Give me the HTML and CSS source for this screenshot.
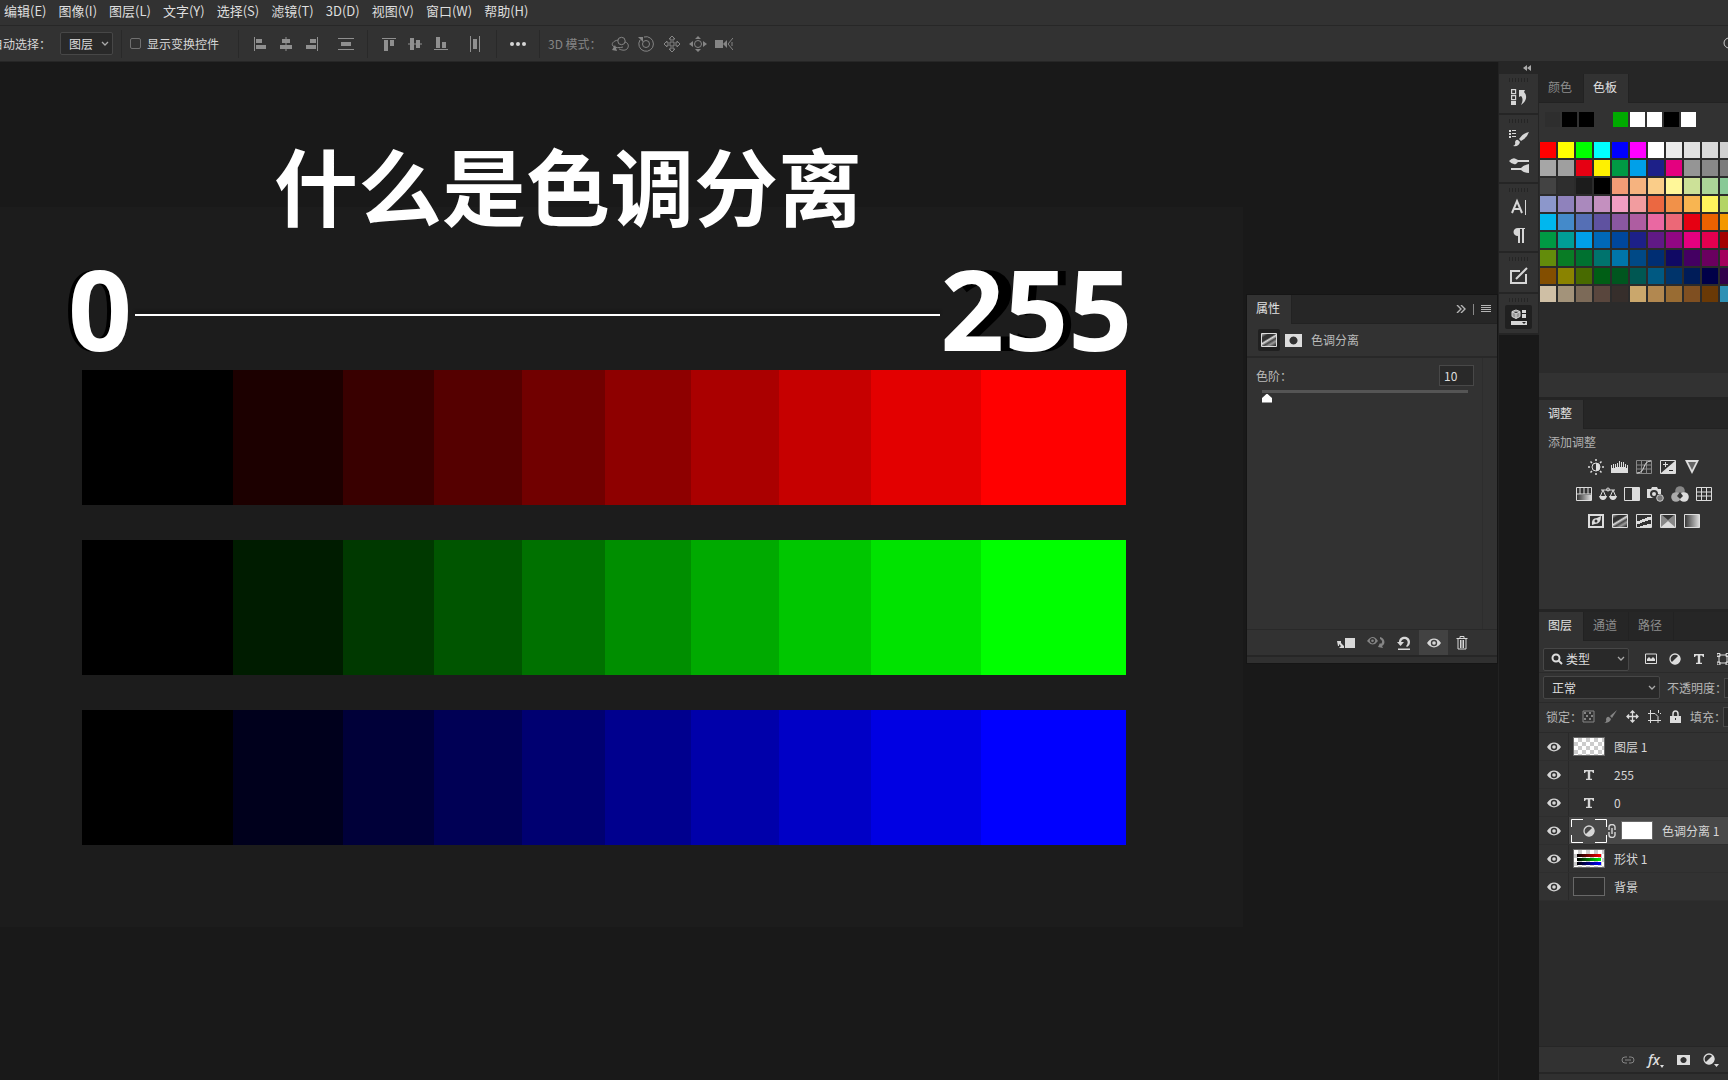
FILE: index.html
```html
<!DOCTYPE html>
<html lang="zh-CN">
<head>
<meta charset="utf-8">
<title>什么是色调分离</title>
<link rel="stylesheet" href="styles.css">
</head>
<body>
<svg class="sprite" aria-hidden="true">
  <symbol id="eye" viewBox="0 0 14 10"><path fill="currentColor" fill-rule="evenodd" d="M0 5Q3 .6 7 .6T14 5Q11 9.4 7 9.4T0 5ZM7 1.8A3.2 3.2 0 1 0 7 8.2A3.2 3.2 0 0 0 7 1.8Z"/><circle cx="7" cy="5" r="1.8" fill="currentColor"/></symbol>
  <symbol id="chevron" viewBox="0 0 8 6"><path d="M1 1l3 3 3-3" fill="none" stroke="currentColor" stroke-width="1.3"/></symbol>
  <symbol id="half" viewBox="0 0 12 12"><circle cx="6" cy="6" r="5" fill="none" stroke="currentColor" stroke-width="1.3"/><path d="M9.800 2.200A5.300 5.300 0 0 1 2.200 9.800Z" fill="currentColor"/></symbol>
  <symbol id="type" viewBox="0 0 12 12"><path fill="currentColor" d="M1 1h10v3h-1L9 2.500H7.200v7.300H9V11H3V9.800h1.800V2.500H3L2 4H1z"/></symbol>
  <symbol id="mask" viewBox="0 0 17 13"><path fill="currentColor" fill-rule="evenodd" d="M0 0H17V13H0ZM8.500 2.500a4 4 0 1 0 .01 0Z"/></symbol>
  <linearGradient id="steel"><stop offset="0" stop-color="#333"/><stop offset="1" stop-color="#ddd"/></linearGradient>
  <linearGradient id="stripes" x1="0.1" y1="0" x2="0.8" y2="1"><stop offset="0" stop-color="#aaa"/><stop offset=".2" stop-color="#333"/><stop offset=".4" stop-color="#333"/><stop offset=".5" stop-color="#ddd"/><stop offset=".65" stop-color="#444"/><stop offset=".8" stop-color="#999"/><stop offset="1" stop-color="#333"/></linearGradient>
</svg>

<header>
  <nav class="menu">
    <a href="#">编辑(E)</a><a href="#">图像(I)</a><a href="#">图层(L)</a><a href="#">文字(Y)</a><a href="#">选择(S)</a><a href="#">滤镜(T)</a><a href="#">3D(D)</a><a href="#">视图(V)</a><a href="#">窗口(W)</a><a href="#">帮助(H)</a>
  </nav>
  <div class="options">
    <div class="group auto"><label for="auto-select">自动选择：</label>
      <span class="select"><select id="auto-select"><option>图层</option></select><svg width="8" height="6"><use href="#chevron"/></svg></span></div>
    <label class="group transform"><input type="checkbox">显示变换控件</label>
    <div class="group align">
      <button aria-label="左对齐"><svg width="16" height="16" viewBox="0 0 16 16"><path d="M2 1h1v14H2zM4 3h6v4H4zM4 9h10v4H4z"/></svg></button>
      <button aria-label="水平居中"><svg width="16" height="16" viewBox="0 0 16 16"><path d="M7.500 1h1v14h-1zM4 3h8v4H4zM2 9h12v4H2z"/></svg></button>
      <button aria-label="右对齐"><svg width="16" height="16" viewBox="0 0 16 16"><path d="M13 1h1v14h-1zM6 3h6v4H6zM2 9h10v4H2z"/></svg></button>
      <button class="spaced" aria-label="垂直分布"><svg width="16" height="16" viewBox="0 0 16 16"><path d="M0 2h16v1H0zM3 6h10v4H3zM0 13h16v1H0z"/></svg></button>
    </div>
    <div class="group align">
      <button aria-label="顶对齐"><svg width="16" height="16" viewBox="0 0 16 16"><path d="M1 2h14v1H1zM3 4h4v11H3zM9 4h4v6H9z"/></svg></button>
      <button aria-label="垂直居中"><svg width="16" height="16" viewBox="0 0 16 16"><path d="M1 7.500h14v1H1zM3 2h4v12H3zM9 4h4v8H9z"/></svg></button>
      <button aria-label="底对齐"><svg width="16" height="16" viewBox="0 0 16 16"><path d="M1 13h14v1H1zM3 1h4v11H3zM9 6h4v6H9z"/></svg></button>
      <button class="spaced" aria-label="水平分布"><svg width="16" height="16" viewBox="0 0 16 16"><path d="M3 0h1v16H3zM6 3h4v10H6zM12 0h1v16h-1z"/></svg></button>
    </div>
    <div class="group more"><button aria-label="更多"><svg width="16" height="6" viewBox="0 0 16 6"><circle cx="2" cy="3" r="2"/><circle cx="8" cy="3" r="2"/><circle cx="14" cy="3" r="2"/></svg></button></div>
    <div class="group modes"><span>3D 模式：</span>
      <button aria-label="环绕"><svg class="line" width="18" height="16" viewBox="0 0 18 16"><circle cx="10.500" cy="5" r="3.700"/><path d="M7 4C2 5 0 8 2 10s7 2 10 1M14 6c4 1 4 5 2 7s-6 1-8 0"/><path class="solid" d="M4 9l2 6-5-1z"/></svg></button>
      <button aria-label="滚动"><svg class="line" width="18" height="16" viewBox="0 0 18 16"><circle cx="9" cy="8" r="3.500"/><path d="M3 4a7.300 7.300 0 1 0 4-3"/><path class="solid" d="M1 1h5v5z"/></svg></button>
      <button aria-label="拖动"><svg class="line" width="18" height="16" viewBox="0 0 18 16"><path d="M9 0l3 3h-2v4h4V5l3 3-3 3V9h-4v4h2l-3 3-3-3h2V9H4v2L1 8l3-3v2h4V3H6z"/></svg></button>
      <button aria-label="滑动"><svg class="line" width="18" height="16" viewBox="0 0 18 16"><circle cx="9" cy="8" r="3.500"/><path class="solid" d="M9 0l3 3H6zM9 16l3-3H6zM0 8l4-3v6zM18 8l-4-3v6z"/></svg></button>
      <button aria-label="缩放"><svg class="line" width="18" height="16" viewBox="0 0 18 16"><path class="solid" d="M0 4h8v8H0zM8 8l4-4v8z"/><path d="M18 2l-5 6 5 6M17 6v4"/></svg></button>
    </div>
    <button class="search" aria-label="搜索"><svg class="line" width="14" height="14" viewBox="0 0 14 14"><circle cx="6" cy="6" r="5"/><path d="M10 10l4 4"/></svg></button>
  </div>
</header>

<main>
  <section class="canvas">
    <div class="artwork">
      <h1>什么是色调分离</h1>
      <div class="scale"><span class="near">0</span><i class="rule"></i><span><span class="deep">2</span><span class="soft">5</span>5</span></div>
      <div class="bar red"></div>
      <div class="bar green"></div>
      <div class="bar blue"></div>
    </div>

    <aside class="properties">
      <div class="tabs"><button class="tab active">属性</button><span class="tools">
        <svg class="line" width="10" height="8" viewBox="0 0 10 8"><path stroke-width="1.400" d="M1 0l4 4-4 4M5 0l4 4-4 4"/></svg><i></i>
        <svg class="line" width="10" height="8" viewBox="0 0 10 8"><path d="M0 .5h10M0 2.500h10M0 4.500h10M0 6.500h10"/></svg></span></div>
      <div class="subject"><span class="chip"><svg width="16" height="14" viewBox="0 0 16 14"><path fill="url(#stripes)" stroke="#ddd" d="M.5.5h15v13H.5z"/></svg></span><svg width="17" height="13"><use href="#mask"/></svg><span>色调分离</span></div>
      <div class="body">
        <div class="field"><label for="levels">色阶：</label><input id="levels" class="num-input" type="text" value="10"></div>
        <input class="slider" type="range" min="2" max="255" value="2" aria-label="色阶滑块">
      </div>
      <div class="actions">
        <button aria-label="剪切到图层"><svg width="18" height="14" viewBox="0 0 18 14"><path d="M8 2h10v10H8zM0 5h4v2L7 10v2H2l2-2-2-2v2H1z"/></svg></button>
        <button class="dim" aria-label="查看上一状态"><svg width="18" height="14" viewBox="0 0 18 14"><path fill-rule="evenodd" d="M0 5q6-8 11 0q-5 7-11 0M5.500 2a2.700 2.700 0 1 0 .01 0M13 1c5 1 6 7 2 9l1 2-5-1 2-4 1 1c2-2 1-4-1-5z"/><circle cx="5.500" cy="4.700" r="1.300"/></svg></button>
        <button aria-label="复位"><svg width="14" height="14" viewBox="0 0 14 14"><path d="M1 12.500h12V14H1zM0 6h2c0-7 11-7 11 0 0 2-1 4-3 5l-1-1c4-4 0-9-4-6L4 6h3l-3.500 4z"/></svg></button>
        <button class="on" aria-label="可见性"><svg width="14" height="10"><use href="#eye"/></svg></button>
        <button aria-label="删除"><svg class="line" width="12" height="14" viewBox="0 0 12 14"><path d="M.5 2.500h11M4 2V.5h4V2M2 3v10h8V3M4.500 4v8M6 4v8M7.500 4v8"/></svg></button>
      </div>
      <div class="grip"></div>
    </aside>
  </section>

  <nav class="dock">
    <div class="dock-head"><svg width="8" height="6" viewBox="0 0 8 6"><path d="M4 0v6L0 3zM8 0v6L4 3z"/></svg></div>
    <div class="dock-group"><button aria-label="历史记录"><svg width="20" height="18" viewBox="0 0 20 18"><path fill="none" stroke="currentColor" stroke-width="1.200" d="M2.600 1.600h4v4h-4zM2.600 7.600h4v4h-4z"/><path d="M2 13h5v4H2zM10 2h6l-1 2c4 4 2 10-3 13 2-4 2-7 0-9l-2 1z"/></svg></button></div>
    <div class="dock-group"><button aria-label="画笔预设"><svg width="20" height="18" viewBox="0 0 20 18"><path d="M0 1h2v2H0zM3 1h4v1H3zM0 4h2v2H0zM3 4h4v1H3zM0 7h2v2H0zM3 7h4v1H3zM20 3q-2 6-8 9l-2-2Q14 4 20 3zM9 11l2 2q-1 5-7 4 3-1 2-4 1-3 3-2z"/></svg></button>
      <button aria-label="画笔"><svg width="20" height="18" viewBox="0 0 20 18"><path d="M0 4q4-4 7-2l2 1h11v2H9L7 7Q3 8 0 4zM2 11h10q3-3 8-4v9q-5 0-8-3H2z"/></svg></button></div>
    <div class="dock-group text"><button aria-label="字符"><svg class="line glyph" width="20" height="18" viewBox="0 0 20 18"><path d="M3 15L8 3l5 12M5 11h6"/><path stroke-width="1" d="M16.500 2v15"/></svg></button>
      <button aria-label="段落"><svg width="20" height="18" viewBox="0 0 20 18"><path d="M9 2h7v1h-1v14h-2V3h-2v14H9v-7C3 10 3 2 9 2z"/></svg></button></div>
    <div class="dock-group"><button aria-label="注释"><svg class="line glyph" width="20" height="18" viewBox="0 0 20 18"><path d="M11 4H2v12h15V7M7 12L18 1"/></svg></button></div>
    <div class="dock-group"><button class="pressed" aria-label="属性"><svg width="16" height="16" viewBox="0 0 16 16"><path fill="#999" stroke="currentColor" d="M1 2.500L5 1l4 1.500v5L5 9.500 1 7.500zM1 3l4 1.500L9 3M5 4.500v5"/><path d="M11 1h4v3h-4zM11 5h4v4h-4zM0 12h16v4H0z"/><path fill="#222" d="M11 13h4l-2 2z"/></svg></button></div>
  </nav>

  <aside class="panels">
    <section class="panel swatches">
      <div class="tabs"><button class="tab">颜色</button><button class="tab active">色板</button></div>
      <div class="recent" id="recent"></div>
      <div class="palette" id="palette"></div>
      <div class="strip"></div>
    </section>
    <section class="panel adjust">
      <div class="tabs"><button class="tab active">调整</button></div>
      <p>添加调整</p>
      <div class="icons">
        <button aria-label="亮度"><svg class="line" width="16" height="16" viewBox="0 0 16 16"><circle cx="8" cy="8" r="4"/><path class="solid" d="M8 4a4 4 0 0 1 0 8z"/><path stroke-width="1.500" d="M8 0v2M8 14v2M0 8h2M14 8h2M2.500 2.500L4 4M12 12l1.500 1.500M2.500 13.500L4 12M12 4l1.500-1.500"/></svg></button>
        <button aria-label="色阶"><svg width="18" height="14" viewBox="0 0 18 14"><path d="M0 13V5h1v3h1V4h1v4h1V4h1v3h1V3h1v4h1V1h1v6h1V2h1v5h1V2h1v5h1V4h1v4h1V5h1v8z"/></svg></button>
        <button aria-label="曲线"><svg class="line" width="16" height="14" viewBox="0 0 16 14"><path class="faint" d="M.5.5h15v13H.5zM5.500 1v12M10.500 1v12M1 5h14M1 9h14"/><path d="M1 13C10 13 6 1 15 1"/></svg></button>
        <button aria-label="曝光度"><svg class="line" width="16" height="14" viewBox="0 0 16 14"><path d="M.5.5h15v13H.5z"/><path class="solid" d="M15 1v12L1 13z"/><path d="M3 4.500h5M5.500 2v5"/><path stroke="#222" d="M9 10.500h4"/></svg></button>
        <button aria-label="自然饱和度"><svg width="16" height="14" viewBox="0 0 16 14"><path d="M1 0h14L8 14z"/><path fill="#666" d="M4 2h8l-4 8z"/></svg></button>
      </div>
      <div class="icons wide">
        <button aria-label="色相"><svg class="line" width="16" height="14" viewBox="0 0 16 14"><path d="M.5.5h15v13H.5zM4 1v6M8 1v6M12 1v6M1 7h14"/><path fill="url(#steel)" stroke="none" d="M1 8h14v5H1z"/></svg></button>
        <button aria-label="色彩平衡"><svg class="line" width="18" height="14" viewBox="0 0 18 14"><path d="M2 3h14M4 3L1 10M4 3l3 7M14 3l-3 7M14 3l3 7"/><circle cx="9" cy="2.500" r="1.500"/><path class="solid" d="M0 9h8q-1 4-4 4T0 9zM10 9h8q-1 4-4 4t-4-4z"/></svg></button>
        <button aria-label="黑白"><svg class="line" width="16" height="14" viewBox="0 0 16 14"><path d="M.5.5h15v13H.5z"/><path class="solid" d="M8 1h7v12H8z"/></svg></button>
        <button aria-label="照片滤镜"><svg width="18" height="16" viewBox="0 0 18 16"><path fill-rule="evenodd" d="M0 3h4l1-2h5l1 2h3v5h-3q0-4-4-4T3 8q0 3 4 4H0z"/><circle cx="7" cy="8" r="2"/><circle cx="13" cy="12" r="3.300" fill="#777" stroke="#ccc"/></svg></button>
        <button aria-label="通道混合器"><svg width="18" height="16" viewBox="0 0 18 16"><circle cx="9" cy="5" r="4.800" fill="#888"/><circle cx="5" cy="11" r="4.800" fill="#aaa"/><circle cx="13" cy="11" r="4.800" fill="#ddd"/><path fill="#333" d="M9 6l3 4-3 3-3-3z"/></svg></button>
        <button aria-label="颜色查找"><svg class="line" width="16" height="14" viewBox="0 0 16 14"><path d="M.5.5h15v13H.5zM5.500 1v12M10.500 1v12M1 5h14M1 9h14"/></svg></button>
      </div>
      <div class="icons">
        <button aria-label="反相"><svg class="line" width="16" height="14" viewBox="0 0 16 14"><path stroke-width="2" d="M1 1h14v12H1z"/><path class="solid" d="M4 11q-1-7 5-7l4-2q0 8-6 8z"/><circle cx="8" cy="7" r="1.500" fill="#333" stroke="none"/></svg></button>
        <button aria-label="色调分离"><svg class="line" width="16" height="14" viewBox="0 0 16 14"><path fill="url(#stripes)" d="M.5.5h15v13H.5z"/></svg></button>
        <button aria-label="阈值"><svg class="line" width="16" height="14" viewBox="0 0 16 14"><path d="M.5.5h15v13H.5z"/><path class="solid" d="M1 7h3V6h2V5h3V4h2V3h4v3h-3v1h-3v1H6v1H4v1H1z"/><path class="solid" d="M4 13v-1h3v-1h4v-1h4v3z"/></svg></button>
        <button aria-label="可选颜色"><svg class="line" width="16" height="14" viewBox="0 0 16 14"><path fill="#888" d="M.5.5h15v13H.5z"/><path class="solid" d="M1 13l7-6 7 6z"/><path fill="#333" stroke="none" d="M2 1l6 5 6-5z"/></svg></button>
        <button aria-label="渐变映射"><svg class="line" width="16" height="14" viewBox="0 0 16 14"><path fill="url(#steel)" d="M.5.5h15v13H.5z"/></svg></button>
      </div>
    </section>
    <section class="panel layers">
      <div class="tabs"><button class="tab active">图层</button><button class="tab">通道</button><button class="tab">路径</button></div>
      <div class="row filter"><span class="select kind"><svg class="line lens" width="12" height="12" viewBox="0 0 12 12"><circle cx="5" cy="5" r="3.500"/><path d="M7.500 7.500L11 11"/></svg><select aria-label="筛选类型"><option>类型</option></select><svg width="8" height="6"><use href="#chevron"/></svg></span>
        <button aria-label="像素"><svg class="line" width="12" height="12" viewBox="0 0 12 12"><path d="M.5 1h11v9.500H.5z"/><path class="solid" d="M2 8V6l2-2 2 2 2-2 2 2v2z"/></svg></button>
        <button aria-label="调整"><svg width="12" height="12"><use href="#half"/></svg></button>
        <button aria-label="文字"><svg width="12" height="12"><use href="#type"/></svg></button>
        <button aria-label="形状"><svg class="line" width="12" height="12" viewBox="0 0 12 12"><path d="M2 2h8v8H2zM0 .5h3v3H0zM9 .5h3v3H9zM0 9h3v3H0zM9 9h3v3H9z"/></svg></button></div>
      <div class="row blend"><span class="select mode"><select aria-label="混合模式"><option>正常</option></select><svg width="8" height="6"><use href="#chevron"/></svg></span><label for="opacity">不透明度：</label><input id="opacity" type="text"></div>
      <div class="row lock"><span>锁定：</span>
        <button class="dim" aria-label="锁定透明"><svg class="line" width="13" height="13" viewBox="0 0 13 13"><path d="M1 1h11v11H1z"/><path class="solid" d="M2 2h2v2H2zM7 2h2v2H7zM4 5h2v2H4zM9 5h2v2H9zM2 8h2v2H2zM7 8h2v2H7z"/></svg></button>
        <button class="dim" aria-label="锁定像素"><svg width="13" height="13" viewBox="0 0 13 13"><path d="M13 0L8 8 6 6zM5 7l2 2q-1 4-7 4 3-1 2-4 1-3 3-2z"/></svg></button>
        <button aria-label="锁定位置"><svg class="line" width="13" height="13" viewBox="0 0 13 13"><path stroke-width="1.300" d="M6.500 1v11M1 6.500h11M4.500 3l2-2 2 2M4.500 10l2 2 2-2M3 4.500l-2 2 2 2M10 4.500l2 2-2 2"/></svg></button>
        <button aria-label="锁定画板"><svg class="line" width="13" height="13" viewBox="0 0 13 13"><path d="M2.500 0v13M0 3.500h7l3 3V13M0 10.500h13M10.500 0v3M12 3.500h1"/></svg></button>
        <button aria-label="全部锁定"><svg width="11" height="13" viewBox="0 0 11 13"><path fill="none" stroke="currentColor" stroke-width="1.500" d="M3 6V4a2.500 3 0 0 1 5 0v2"/><path fill-rule="evenodd" d="M0 6h11v7H0zM5 8v2h1V8z"/></svg></button>
        <label for="fill">填充：</label><input id="fill" type="text"></div>
      <ul class="list">
        <li><button class="vis" aria-label="可见"><svg width="14" height="10"><use href="#eye"/></svg></button><span class="thumb checker"></span><span>图层 1</span></li>
        <li><button class="vis" aria-label="可见"><svg width="14" height="10"><use href="#eye"/></svg></button><span class="thumb bare"><svg width="12" height="12"><use href="#type"/></svg></span><span>255</span></li>
        <li><button class="vis" aria-label="可见"><svg width="14" height="10"><use href="#eye"/></svg></button><span class="thumb bare"><svg width="12" height="12"><use href="#type"/></svg></span><span>0</span></li>
        <li class="selected"><button class="vis" aria-label="可见"><svg width="14" height="10"><use href="#eye"/></svg></button><span class="framed"><svg class="line" width="36" height="24" viewBox="0 0 36 24"><path stroke="#fff" d="M12 .5H.5V8M24 .5h11.500V8M.5 16v7.500H12M35.500 16v7.500H24"/></svg><svg width="12" height="12"><use href="#half"/></svg></span><svg class="line" width="8" height="14" viewBox="0 0 8 14"><path stroke-width="1.400" d="M1 6V3a3 2.500 0 0 1 6 0v3M1 8v3a3 2.500 0 0 0 6 0V8M4 4v6"/></svg><span class="thumb white"></span><span>色调分离 1</span></li>
        <li><button class="vis" aria-label="可见"><svg width="14" height="10"><use href="#eye"/></svg></button><span class="thumb checker bars"><i></i><i></i><i></i></span><span>形状 1</span></li>
        <li><button class="vis" aria-label="可见"><svg width="14" height="10"><use href="#eye"/></svg></button><span class="thumb"></span><span>背景</span></li>
      </ul>
      <div class="foot">
        <button class="dim" aria-label="链接"><svg class="line" width="14" height="8" viewBox="0 0 14 8"><path d="M6 1H4a3 3 0 0 0 0 6h2M8 1h2a3 3 0 0 1 0 6H8M4 4h6"/></svg></button>
        <button class="fx">fx<svg width="4" height="3" viewBox="0 0 4 3"><path d="M0 0h4L2 3z"/></svg></button>
        <button aria-label="蒙版"><svg width="13" height="10" viewBox="0 0 17 13"><use href="#mask"/></svg></button>
        <button aria-label="新建调整"><svg width="16" height="14" viewBox="0 0 16 14"><use href="#half" width="12" height="12"/><path d="M11 11h5l-2.500 3z"/></svg></button>
      </div>
      <div class="grip"></div>
    </section>
  </aside>
</main>
<script src="script.js"></script>
</body>
</html>
```
FILE: styles.css
```css
* { box-sizing: border-box; }
body {
  margin: 0;
  min-height: 100vh;
  display: flex;
  flex-direction: column;
  overflow: hidden;
  background: #191919;
  color: #d6d6d6;
  font: 12px/16px "Noto Sans CJK SC", sans-serif;
}
button, input, select { font: inherit; color: inherit; border: 0; border-radius: 0; background: none; padding: 0; margin: 0; }
button { display: flex; align-items: center; justify-content: center; flex: none; }
svg { display: block; flex: none; fill: currentColor; }
.sprite { position: absolute; width: 0; height: 0; }
.line { fill: none; stroke: currentColor; }
.line .solid { fill: currentColor; stroke: none; }
.line .faint { stroke: #888; }
.dim { color: #858585; }

/* menu and option bars */
.menu { display: flex; gap: 12px; height: 26px; padding: 0 0 3px 4px; align-items: center; background: #323232; border-bottom: 1px solid #272727; font-size: 13px; white-space: nowrap; }
.menu a { color: #dedede; text-decoration: none; line-height: 20px; }
.options { display: flex; height: 36px; background: #323232; border-bottom: 1px solid #262626; align-items: center; overflow: hidden; white-space: nowrap; }
.group { display: flex; align-items: center; height: 28px; border-right: 1px solid #292929; flex: none; }
.auto { width: 122px; justify-content: flex-end; padding-right: 8px; gap: 9px; }
.auto label { flex: none; }
.select { display: flex; flex: none; align-items: center; height: 23px; border: 1px solid #474747; border-radius: 2px; background: #292929; color: #ddd; }
.select select { appearance: none; flex: 1; width: 0; padding-left: 8px; outline: none; }
.select > svg { margin-right: 3px; color: #aaa; }
.auto .select { width: 53px; }
.transform { width: 117px; gap: 6px; padding-left: 8px; }
.transform input { appearance: none; width: 11px; height: 11px; border: 1px solid #707070; border-radius: 2px; }
.align { gap: 10px; padding: 0 13px; color: #8f8f8f; width: 129px; }
.align .spaced { margin-left: 8px; }
.more { width: 43px; justify-content: center; }
.modes { border: 0; gap: 8px; padding-left: 8px; color: #858585; }
.modes span { width: 55px; }
.search { margin: 0 -9px 0 auto; color: #ccc; }

/* workspace */
main { flex: 1; display: flex; }
.canvas { flex: 1; min-width: 0; position: relative; }
.artwork { width: 83%; height: 865px; padding: 68px 117px 0 82px; background: linear-gradient(#1c1c1c, #1c1c1c) no-repeat 0 145px; color: #fff; }
h1 { margin: 0; padding-left: 192px; font-size: 84px; line-height: 108px; font-weight: 700; white-space: nowrap; }
.scale { display: flex; align-items: center; height: 132px; margin: 0 -6px 0 -14px; padding: 13px 0 5px; font: 700 112px/114px "Open Sans", sans-serif; }
.near { text-shadow: -4px 0 #000; }
.deep { text-shadow: 13px 0 #000; }
.soft { text-shadow: 8px 0 #000; }
.rule { flex: 1; height: 2px; margin: 14px 0 0 3px; background: #fff; box-shadow: 0 -3px 3px #151515; }
.bar { display: grid; grid-template-columns: 151fr 110fr 91fr 88fr 83fr 86fr 88fr 92fr 110fr 145fr; height: 135px; margin-bottom: 35px; }

/* properties panel floats above the canvas */
.properties { position: absolute; right: 0; top: 232px; width: 252px; border: 1px solid #151515; background: #323232; }
.tabs { display: flex; height: 29px; background: #262626; border-bottom: 1px solid #222; }
.tab { width: 45px; height: 28px; padding: 0 2px 3px 0; color: #8d8d8d; border-right: 1px solid #222; }
.tab.active { background: #323232; color: #e2e2e2; height: 29px; }
.tools { margin-left: auto; display: flex; align-items: center; gap: 7px; padding-right: 6px; color: #b5b5b5; }
.tools i { width: 1px; height: 11px; background: #888; }
.subject { display: flex; align-items: center; height: 34px; padding-left: 11px; gap: 5px; border-bottom: 2px solid #282828; color: #bbb; }
.subject > svg { color: #ddd; }
.subject span:last-child { padding-left: 4px; }
.chip { width: 22px; height: 22px; display: grid; place-items: center; background: #202020; border-radius: 2px; }
.body { height: 271px; margin-right: 14px; padding: 7px 8px 0 9px; border-right: 1px solid #2d2d2d; }
.field { display: flex; justify-content: space-between; align-items: center; color: #bbb; }
.num-input { width: 35px; height: 21px; padding-left: 4px; border: 1px solid #484848; background: #292929; color: #ddd; }
.slider { appearance: none; display: block; width: 206px; height: 14px; margin: -2px 0 0 6px; }
.slider::-webkit-slider-runnable-track { height: 3px; background: #555; }
.slider::-webkit-slider-thumb { appearance: none; width: 10px; height: 9px; margin-top: 4px; background: #fff; clip-path: polygon(50% 0, 100% 50%, 100% 100%, 0 100%, 0 50%); }
.actions { display: flex; align-items: center; justify-content: flex-end; height: 26px; padding-right: 29px; border-top: 1px solid #292929; gap: 8px; color: #d8d8d8; }
.actions .dim { color: #858585; margin: 0 4px; }
.actions .on { width: 29px; height: 25px; background: #424242; }
.grip { height: 8px; border-top: 2px solid #262626; background: #303030; }

/* collapsed icon dock */
.dock { width: 41px; border-left: 1px solid #222; color: #d6d6d6; }
.dock-head { height: 12px; background: #262626; padding: 3px 0 0 24px; color: #aaa; }
.dock-group { background: repeating-linear-gradient(90deg, #252525 0 1px, transparent 1px 3px) 10px 4px / 19px 4px no-repeat, #323232; border-bottom: 2px solid #252525; border-right: 1px solid #252525; padding: 9px 6px 1px; height: 41px; }
.dock-group button { width: 27px; height: 28px; }
.dock-group:nth-child(3), .dock-group.text { height: 69px; }
.dock-group .pressed { height: 24px; margin-top: 2px; background: #202020; border-radius: 2px; }
.glyph { stroke-width: 2; }

/* right panels */
.panels { width: 189px; display: flex; flex-direction: column; overflow: hidden; background: #2b2b2b; }
.panel { background: #323232; border-bottom: 3px solid #242424; }
.swatches > .tabs { height: 41px; padding-top: 12px; }
.swatches { background: #2b2b2b; }
.recent { display: flex; gap: 2px; height: 39px; padding: 9px 6px 15px; background: #323232; }
.recent button { width: 15px; height: 15px; }
.palette { display: grid; grid-template-columns: repeat(11, 16px); gap: 2px; padding-left: 1px; height: 231px; align-content: start; }
.palette button { width: 16px; height: 16px; }
.strip { height: 24px; background: #323232; }
.adjust { height: 212px; }
.adjust p { margin: 5px 0 9px 9px; color: #b0b0b0; }
.icons { display: flex; gap: 6px; height: 27px; padding-left: 48px; color: #ddd; }
.icons.wide { padding-left: 36px; }
.icons button { width: 18px; height: 16px; }
.layers { flex: 1; display: flex; flex-direction: column; border: 0; }
.row { display: flex; align-items: center; height: 30px; padding-left: 4px; border-bottom: 1px solid #2a2a2a; color: #b5b5b5; white-space: nowrap; flex: none; }
.filter { height: 32px; padding-top: 5px; gap: 12px; color: #ddd; }
.filter .kind { width: 86px; margin-right: 4px; }
.select .lens { margin: 0 0 0 7px; stroke-width: 2; color: #ddd; }
.kind select { padding-left: 3px; }
.mode { width: 117px; margin-right: 7px; }
.row input { flex: none; width: 60px; height: 20px; border: 1px solid #484848; background: #292929; }
.blend label { flex: none; width: 57px; }
.lock { padding: 0 0 2px 7px; gap: 9px; color: #ddd; }
.lock > span, .lock label { flex: none; color: #b5b5b5; }
.lock > span { width: 27px; }
.lock label { width: 24px; }
.list { list-style: none; margin: 0; padding: 0; flex: 1; background: #2b2b2b; }
.list li { display: flex; align-items: center; height: 28px; background: #323232; border-bottom: 1px solid #2e2e2e; white-space: nowrap; }
.vis { width: 30px; height: 27px; border-right: 1px solid #292929; background: #323232; margin-right: 4px; }
.thumb { width: 32px; height: 19px; border: 1px solid #686868; background: #2b2b2b; margin-right: 9px; flex: none; }
.bare { display: grid; place-items: center; border: 0; background: none; }
.checker { background: conic-gradient(#ccc 25%, #fff 0 50%, #ccc 0 75%, #fff 0) 0 0 / 8px 8px; }
.bars { display: flex; flex-direction: column; gap: 1px; padding: 4px 3px 0; }
.bars i { height: 3px; background: linear-gradient(90deg, #000, #f00); }
.bars i:nth-child(2) { background: linear-gradient(90deg, #000, #0e0); }
.bars i:nth-child(3) { background: linear-gradient(90deg, #000, #00f); }
.list .selected { background: #484848; }
.selected .vis { margin-right: 2px; }
.framed { display: grid; place-items: center; margin-right: 1px; }
.framed svg { grid-area: 1 / 1; }
.white { background: #fff; margin: 0 9px 0 5px; }
.foot { display: flex; align-items: center; height: 26px; border-top: 1px solid #262626; padding-left: 82px; gap: 13px; color: #ddd; }
.fx { align-items: flex-end; font: italic 600 14px/16px "Open Sans", sans-serif; }
```
FILE: script.js
```js
const palette = `
ff0000 ffff00 00ff00 00ffff 0000ff ff00ff ffffff ebebeb e1e1e1 d9d9d9 cfcfcf
a6a6a6 9f9f9f e60012 fff100 009944 00a0e9 1d2088 e4007f 959595 888888 7b7b7b
434343 2e2e2e 1c1c1c 000000 f29b76 f6b37f facd89 fff799 cce198 acd598 89c997
8c97cb 8f82bc aa89bd c490bf f19ec2 f29c9f eb6841 f19149 f8b551 fff45c b3d465
00b7ee 448aca 556fb5 5f52a0 8957a1 ae5da1 ea68a2 ec6877 e60012 eb6100 f39800
009944 009e96 00a0e9 0068b7 00479d 1d2088 601986 920783 e4007f e5004f a40000
638c0b 097c25 007130 00736d 0075a9 004986 002e73 100964 440062 6a005f a4005d
834e00 8a8300 486a00 005e15 00561f 005752 005982 00346b 001c58 000048 32004a
cfbfa5 a3937a 7c6a58 59463d 362e2b caa76c b28850 996c33 7f4f21 6a3906 2e90b4`;
const recent = "2e2e2e 000000 000000 323232 00aa00 ffffff ffffff 000000 ffffff";

function fill(id, colors) {
  const box = document.getElementById(id);
  colors.trim().split(/\s+/).forEach((c) => {
    const b = document.createElement("button");
    b.style.background = "#" + c;
    b.setAttribute("aria-label", "#" + c);
    box.append(b);
  });
}
fill("palette", palette);
fill("recent", recent);

// ten evenly spaced levels per channel
["red", "green", "blue"].forEach((name, channel) => {
  const bar = document.querySelector(".bar." + name);
  for (let i = 0; i < 10; i++) {
    const rgb = [0, 0, 0];
    rgb[channel] = Math.round((255 * i) / 9);
    const step = document.createElement("span");
    step.style.background = `rgb(${rgb})`;
    bar.append(step);
  }
});
```
